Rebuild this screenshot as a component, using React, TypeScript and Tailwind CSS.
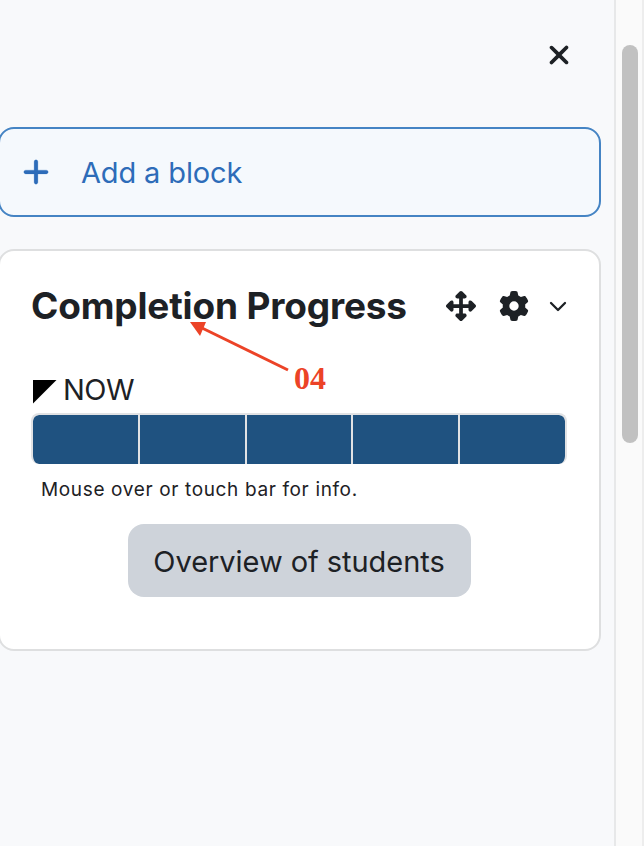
import React from "react";
import { FaGear, FaPlus, FaUpDownLeftRight, FaXmark } from "react-icons/fa6";

const segments = ["w-[105px]", "w-[105px]", "w-[104px]", "w-[105px]", "w-[105px]"];

function AddBlock() {
  return (
    <button className="-ml-[2px] flex h-[90px] w-[603px] items-center rounded-[16px] border-2 border-[#4584c4] bg-[#f5f9fd] pl-[21px] text-[#2d6cb9]">
      <FaPlus className="h-[30px] w-[30px] shrink-0 stroke-current [stroke-width:4px]" />
      <span className="ml-[30px] mt-[2px] whitespace-nowrap text-[29px] leading-[36px] tracking-[-0.14px]">Add a block</span>
    </button>
  );
}

function CompletionProgress() {
  return (
    <section className="relative -ml-[2px] mt-8 h-[402px] w-[603px] rounded-[16px] border-2 border-[#dedfe0] bg-white pl-[31px] pr-[32px] pt-[31px]">
      <header className="flex h-12 items-center">
        <h2 className="w-[415px] whitespace-nowrap text-[37px] font-bold leading-[48px] tracking-[-0.17px]">
          Completion Progress
        </h2>
        <FaUpDownLeftRight className="h-[30px] w-[30px]" />
        <FaGear className="ml-[23px] h-[30px] w-[30px]" />
        <svg className="ml-[20px] h-4 w-[18px]" viewBox="0 0 18 16" fill="none">
          <path d="M2 5L9 12L16 5" stroke="currentColor" strokeWidth="2.3" strokeLinecap="round" strokeLinejoin="round" />
        </svg>
      </header>
      <div className="mt-[37px] flex h-[44px] items-center">
        <svg className="ml-[2px] mt-[5px] h-6 w-6" viewBox="0 0 24 24">
          <path d="M0 0H23.5L0 23.5Z" fill="#000" />
        </svg>
        <span className="ml-[6px] mt-[2px] text-[29px] leading-[36px] tracking-[-0.5px]">NOW</span>
      </div>
      <div className="mt-[2px] flex h-[51px] w-[536px] gap-[2px] overflow-hidden rounded-[8px] border-x-2 border-t-2 border-[#e1e2e4] bg-[#e1e2e4]">
        {segments.map((width, i) => (
          <div
            key={i}
            className={`${width} shrink-0 bg-[#1f5280] ${i === 0 ? "rounded-l-[6px]" : ""} ${i === 4 ? "rounded-r-[6px]" : ""}`}
          />
        ))}
      </div>
      <p className="ml-[10px] mt-[12px] whitespace-nowrap text-[19px] leading-7 tracking-[0.64px]">
        Mouse over or touch bar for info.
      </p>
      <div className="mt-[20px] flex justify-center">
        <button className="h-[73px] w-[343px] whitespace-nowrap rounded-[16px] bg-[#ced3da] pt-[2px] text-[29px] leading-[36px] tracking-[-0.05px]">
          Overview of students
        </button>
      </div>
      <svg className="pointer-events-none absolute left-[186px] top-[64px] h-16 w-28" viewBox="186 315 112 64">
        <path d="M200 327L288 370" stroke="#ec4327" strokeWidth="3" />
        <path d="M190 322L206 322L200 336Z" fill="#ec4327" />
      </svg>
      <span className="absolute left-[294px] top-[109px] font-['Liberation_Serif',serif] text-[32px] font-bold leading-[36px] text-[#ec4327]">
        04
      </span>
    </section>
  );
}

export default function App() {
  return (
    <div className="flex h-[846px] w-[644px] overflow-hidden bg-[#f8f9fb] font-['Inter',sans-serif] text-[#1d2125]">
      <main className="w-[614px] shrink-0">
        <div className="flex h-[127px] justify-end pr-[40px] pt-[40px]">
          <button aria-label="Close" className="h-[30px] w-[30px]">
            <FaXmark className="h-[30px] w-[30px]" />
          </button>
        </div>
        <AddBlock />
        <CompletionProgress />
      </main>
      <aside className="w-[30px] shrink-0 border-x-2 border-l-[#e7e8e9] border-r-[#ededed] bg-[#fafafa] pl-[6px] pt-[45px]">
        <div className="h-[398px] w-4 rounded-full bg-[#c1c1c1]" />
      </aside>
    </div>
  );
}
